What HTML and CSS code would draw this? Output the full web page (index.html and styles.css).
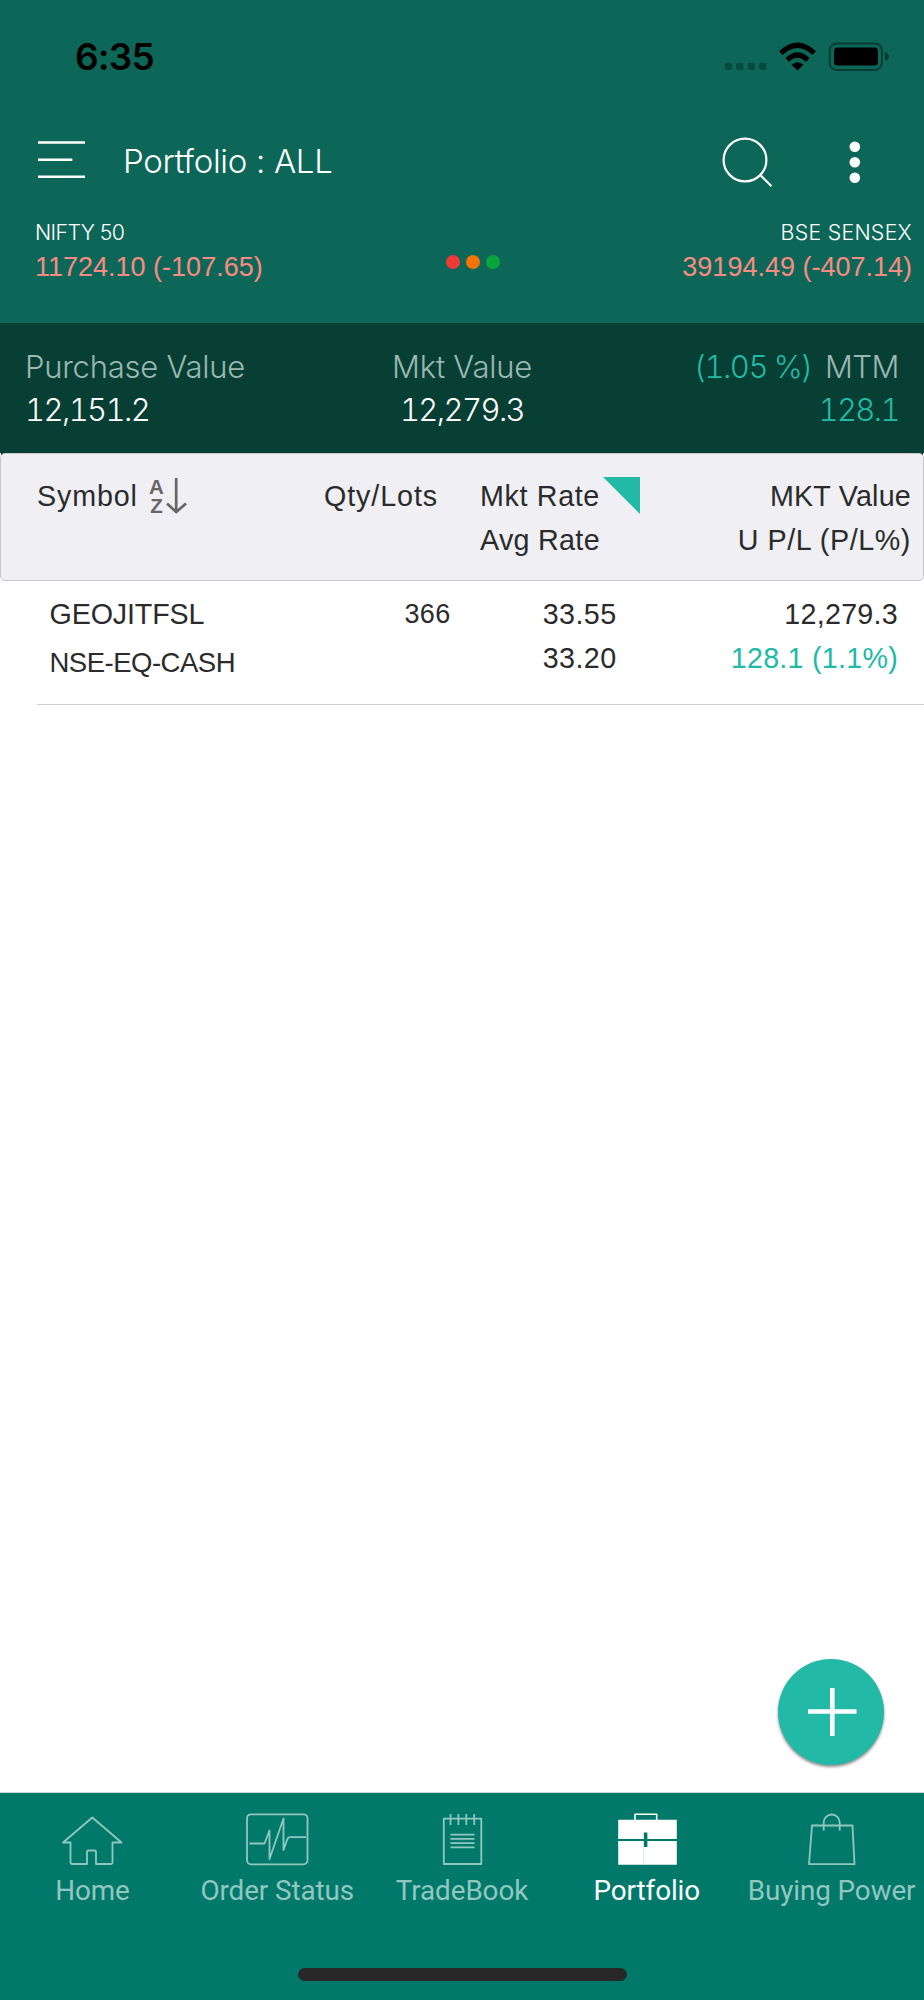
FILE: index.html
```html
<!DOCTYPE html>
<html lang="en">
<head>
<meta charset="utf-8">
<title>Portfolio</title>
<link rel="stylesheet" href="styles.css">
</head>
<body>
<div class="app">
  <header class="top">
    <div class="status">
      <span class="clock">6:35</span>
      <svg class="status-icons" width="166" height="30" viewBox="724 42 166 30">
        <g fill="#000" opacity=".28"><rect x="724.7" y="62.8" width="7.4" height="7.2" rx="2"/><rect x="736" y="62.8" width="7.4" height="7.2" rx="2"/><rect x="747.6" y="62.8" width="7.4" height="7.2" rx="2"/><rect x="759" y="62.8" width="7.4" height="7.2" rx="2"/></g>
        <g fill="none" stroke="#000" stroke-width="5.2"><path d="M780.8 53.2Q797.5 37.4 814.2 53.2"/><path d="M787.2 60Q797.5 50.2 807.8 60"/></g>
        <path d="M791.5 64.8Q797.5 59.6 803.5 64.8L797.5 70.4Z"/>
        <rect x="829.7" y="43.5" width="52.2" height="26.4" rx="7" fill="none" stroke="#000" stroke-opacity=".42" stroke-width="2"/>
        <rect x="834" y="47.6" width="44" height="18" rx="3.5"/>
        <path d="M885 52q4 2 4 4.6t-4 4.6z" fill-opacity=".45"/>
      </svg>
    </div>
    <div class="titlebar">
      <svg class="menu" width="48" height="40" viewBox="38 140 48 40"><path d="M38 142.5H85M38 159.7H72.3M38 176.8H85" stroke="#fff" stroke-width="2.4"/></svg>
      <h1 class="title">Portfolio : ALL</h1>
      <svg class="search" width="52" height="52" viewBox="722 136 52 52"><g fill="none" stroke="#fff" stroke-width="2.2"><circle cx="745" cy="160" r="21.4"/><path d="M760 174.8L771.5 186.3"/></g></svg>
      <svg class="more" width="12" height="44" viewBox="849 140 12 44" fill="#fff"><circle cx="854.8" cy="146.7" r="5.3"/><circle cx="854.8" cy="162.3" r="5.3"/><circle cx="854.8" cy="177.8" r="5.3"/></svg>
    </div>
    <div class="indices">
      <div class="index"><div class="index-name">NIFTY 50</div><div class="index-value">11724.10 (-107.65)</div></div>
      <div class="lights"><i class="light red"></i><i class="light orange"></i><i class="light green"></i></div>
      <div class="index right"><div class="index-name sensex">BSE SENSEX</div><div class="index-value">39194.49 (-407.14)</div></div>
    </div>
  </header>

  <section class="summary">
    <div><div class="label">Purchase Value</div><div class="amount">12,151.2</div></div>
    <div class="center"><div class="label">Mkt Value</div><div class="amount">12,279.3</div></div>
    <div class="right"><div class="label"><span class="gain percent">(1.05 %)</span><span class="mtm">MTM</span></div><div class="amount gain">128.1</div></div>
  </section>

  <section class="columns">
    <div class="symbol-head"><span class="symbol-label">Symbol</span>
      <svg class="sort" width="40" height="38" viewBox="148 476 40 38"><text class="sort-letter" x="156.5" y="492.8">A</text><text class="sort-letter" x="156.5" y="512.3">Z</text><path d="M176.2 477V511M167 502.5L176.2 511L186 502.5" fill="none" stroke="#666" stroke-width="2.7"/></svg>
    </div>
    <div class="right qty-head">Qty/Lots</div>
    <div class="rate-head"><div class="mkt-rate">Mkt Rate</div><div class="avg-rate">Avg Rate</div></div>
    <svg class="corner" width="37" height="37" viewBox="0 0 37 37"><path d="M0 0H37V37Z" fill="#22baa7"/></svg>
    <div class="right"><div class="mkt-head">MKT Value</div><div class="pl-head">U P/L (P/L%)</div></div>
  </section>

  <main class="list">
    <div class="holding">
      <div><div class="ticker">GEOJITFSL</div><div class="segment">NSE-EQ-CASH</div></div>
      <div class="right qty">366</div>
      <div class="right rates"><div>33.55</div><div>33.20</div></div>
      <div class="right values"><div>12,279.3</div><div class="gain">128.1 (1.1%)</div></div>
    </div>
    <button class="fab" aria-label="Add"><svg width="106" height="106" viewBox="778 1659 106 106"><path d="M808 1711.5H856.5M832.3 1688V1736" stroke="#fff" stroke-width="4.6"/></svg></button>
  </main>

  <nav class="tabs">
    <a class="tab"><svg width="64" height="54" viewBox="61 1812 64 54"><path d="M93.3 1817.5L122.5 1842.5H113.5V1862.5Q113.5 1864 112 1864H97V1852Q97 1850.5 95.5 1850.5H89.5Q88 1850.5 88 1852V1864H73Q71.5 1864 71.5 1862.5V1842.5H64Z"/></svg><span>Home</span></a>
    <a class="tab"><svg width="64" height="54" viewBox="245 1812 64 54"><rect x="247" y="1814.3" width="60.5" height="50" rx="4"/><path d="M249.5 1843.5H264.5L269.5 1830.5V1859L283.5 1818.5V1850L287 1840Q288 1837.2 290 1837.2H306"/></svg><span>Order Status</span></a>
    <a class="tab"><svg width="64" height="54" viewBox="430 1812 64 54"><path d="M448 1818.7H443.8V1864H481.3V1818.7H477M450.5 1814V1825M458.4 1814V1825M466.3 1814V1825M474.2 1814V1825M448 1818.7H477M450.5 1834.7H474.5M450.5 1838.9H474.5M450.5 1843.1H474.5M450.5 1847.3H474.5"/></svg><span>TradeBook</span></a>
    <a class="tab active"><svg width="64" height="54" viewBox="615 1812 64 54"><path d="M635 1820V1814.3H656.7V1820" stroke-width="1.6"/><path d="M618.2 1819.7H676.8V1864.8H618.2Z" fill="#fff" stroke="none"/><path d="M618 1840H677" stroke="#00796b" stroke-width="1.8"/><path d="M645.6 1832.5V1847" stroke="#00796b" stroke-width="3.6"/><path d="M643.5 1847V1865" stroke="#cce4e1" stroke-width=".7"/></svg><span>Portfolio</span></a>
    <a class="tab"><svg width="64" height="54" viewBox="800 1812 64 54"><path d="M812 1825.5H852.5L854.5 1864.2H809Z"/><path d="M823.7 1830.5V1822.5A8 8 0 0 1 839.7 1822.5V1830.5"/></svg><span>Buying Power</span></a>
    <div class="home-bar"></div>
  </nav>
</div>
</body>
</html>
```
FILE: styles.css
```css
* { box-sizing: border-box; }
body { margin: 0; background: #fff; font-family: "Liberation Sans", Arial, sans-serif; }
svg { display: block; flex: none; }
.app { width: 924px; height: 2000px; display: flex; flex-direction: column; overflow: hidden; white-space: nowrap; }
.right { text-align: right; }
.center { text-align: center; }

.top { height: 323px; background: #0d6758; color: #fff; }
.status { height: 113px; padding: 0 34px 0 75px; display: flex; align-items: center; justify-content: space-between; }
.clock { font: 600 37px Inter, sans-serif; letter-spacing: -.8px; color: #000; }
.titlebar { height: 97px; padding: 0 63px 0 38px; display: flex; align-items: center; }
.menu { margin-top: -3px; }
.title { margin: -1px auto 0 37px; font: 300 33px Inter, sans-serif; letter-spacing: -.3px; font-variant-ligatures: none; }
.search { margin-right: 75px; }
.indices { padding: 8px 12px 0 35px; display: grid; grid-template-columns: 1fr auto 1fr; }
.index-name { font: 300 21.3px/29.5px Inter, sans-serif; letter-spacing: -.6px; }
.index-name.sensex { letter-spacing: .3px; }
.index-value { font-size: 27px; line-height: 38px; color: #f98b82; }
.lights { display: flex; gap: 6px; padding: 36.5px 2px 0 0; }
.light { width: 14px; height: 14px; border-radius: 50%; }
.red { background: #eb3b37; }
.orange { background: #f57408; }
.green { background: #08a43c; }

.summary { height: 130px; padding: 23px 25px 0; background: #083f34; display: grid; grid-template-columns: 1fr auto 1fr; font: 300 31px/42px Inter, sans-serif; letter-spacing: -.25px; }
.label { height: 43px; color: #9ab7b1; }
.amount { color: #fff; font-variant-numeric: tabular-nums; letter-spacing: -1.6px; }
.gain, .amount.gain { color: #22baa7; }
.percent { font-variant-numeric: tabular-nums; letter-spacing: -1.5px; }
.mtm { margin-left: 13px; letter-spacing: -.5px; }

.columns { height: 128px; padding: 20px 12px 0 36px; background: #efeff4; border: 1px solid #c8c7cc; border-radius: 5px; box-shadow: 0 -6px 0 -1px #083f34; display: grid; grid-template-columns: 287px 114px 165px 37px 1fr; font-size: 28.7px; line-height: 44px; color: #2b2b2b; }
.symbol-head { display: flex; height: 44px; align-items: center; gap: 10px; letter-spacing: .85px; }
.sort-letter { font: bold 20.5px "Liberation Sans", Arial, sans-serif; letter-spacing: 0; text-anchor: middle; fill: #666; }
.qty-head { letter-spacing: .9px; }
.rate-head { padding-left: 42px; }
.mkt-rate { letter-spacing: .65px; }
.avg-rate { letter-spacing: .3px; }
.mkt-head { letter-spacing: .2px; }
.pl-head { letter-spacing: .58px; }
.corner { margin-top: 3px; }

.list { flex: 1; position: relative; }
.holding { height: 124px; margin-left: 37px; padding: 11px 26px 0 12.5px; border-bottom: 1px solid #cfcfd1; display: grid; grid-template-columns: 250px 151px 166px 1fr; font-size: 28.7px; line-height: 44px; color: #2b2b2b; }
.ticker { letter-spacing: -.15px; }
.segment { font-size: 27.5px; line-height: 53px; letter-spacing: -.5px; }
.qty { font-size: 27px; letter-spacing: .3px; }
.rates { letter-spacing: .4px; }
.values { letter-spacing: .25px; }
.fab { position: absolute; right: 40px; bottom: 27px; width: 106px; height: 106px; padding: 0; border: 0; border-radius: 50%; background: #22baa7; box-shadow: 0 2px 3px rgba(0,0,0,.45); }

.tabs { height: 208px; padding-top: 19px; background: #00796b; border-top: 1px solid #c5dad7; display: grid; grid-template-columns: repeat(5, 1fr); grid-template-rows: 156px 13px; font: 400 27.8px/40px Roboto, sans-serif; letter-spacing: -.08px; color: #92c7c0; }
.tab { display: flex; flex-direction: column; align-items: center; gap: 5px; }
.tab svg { fill: none; stroke: #92c7c0; stroke-width: 1.8; stroke-linejoin: round; }
.tab.active { color: #fff; }
.tab.active svg { stroke: #fff; }
.home-bar { grid-column: 1 / -1; justify-self: center; width: 329px; height: 13px; border-radius: 7px; background: #282828; }
```
